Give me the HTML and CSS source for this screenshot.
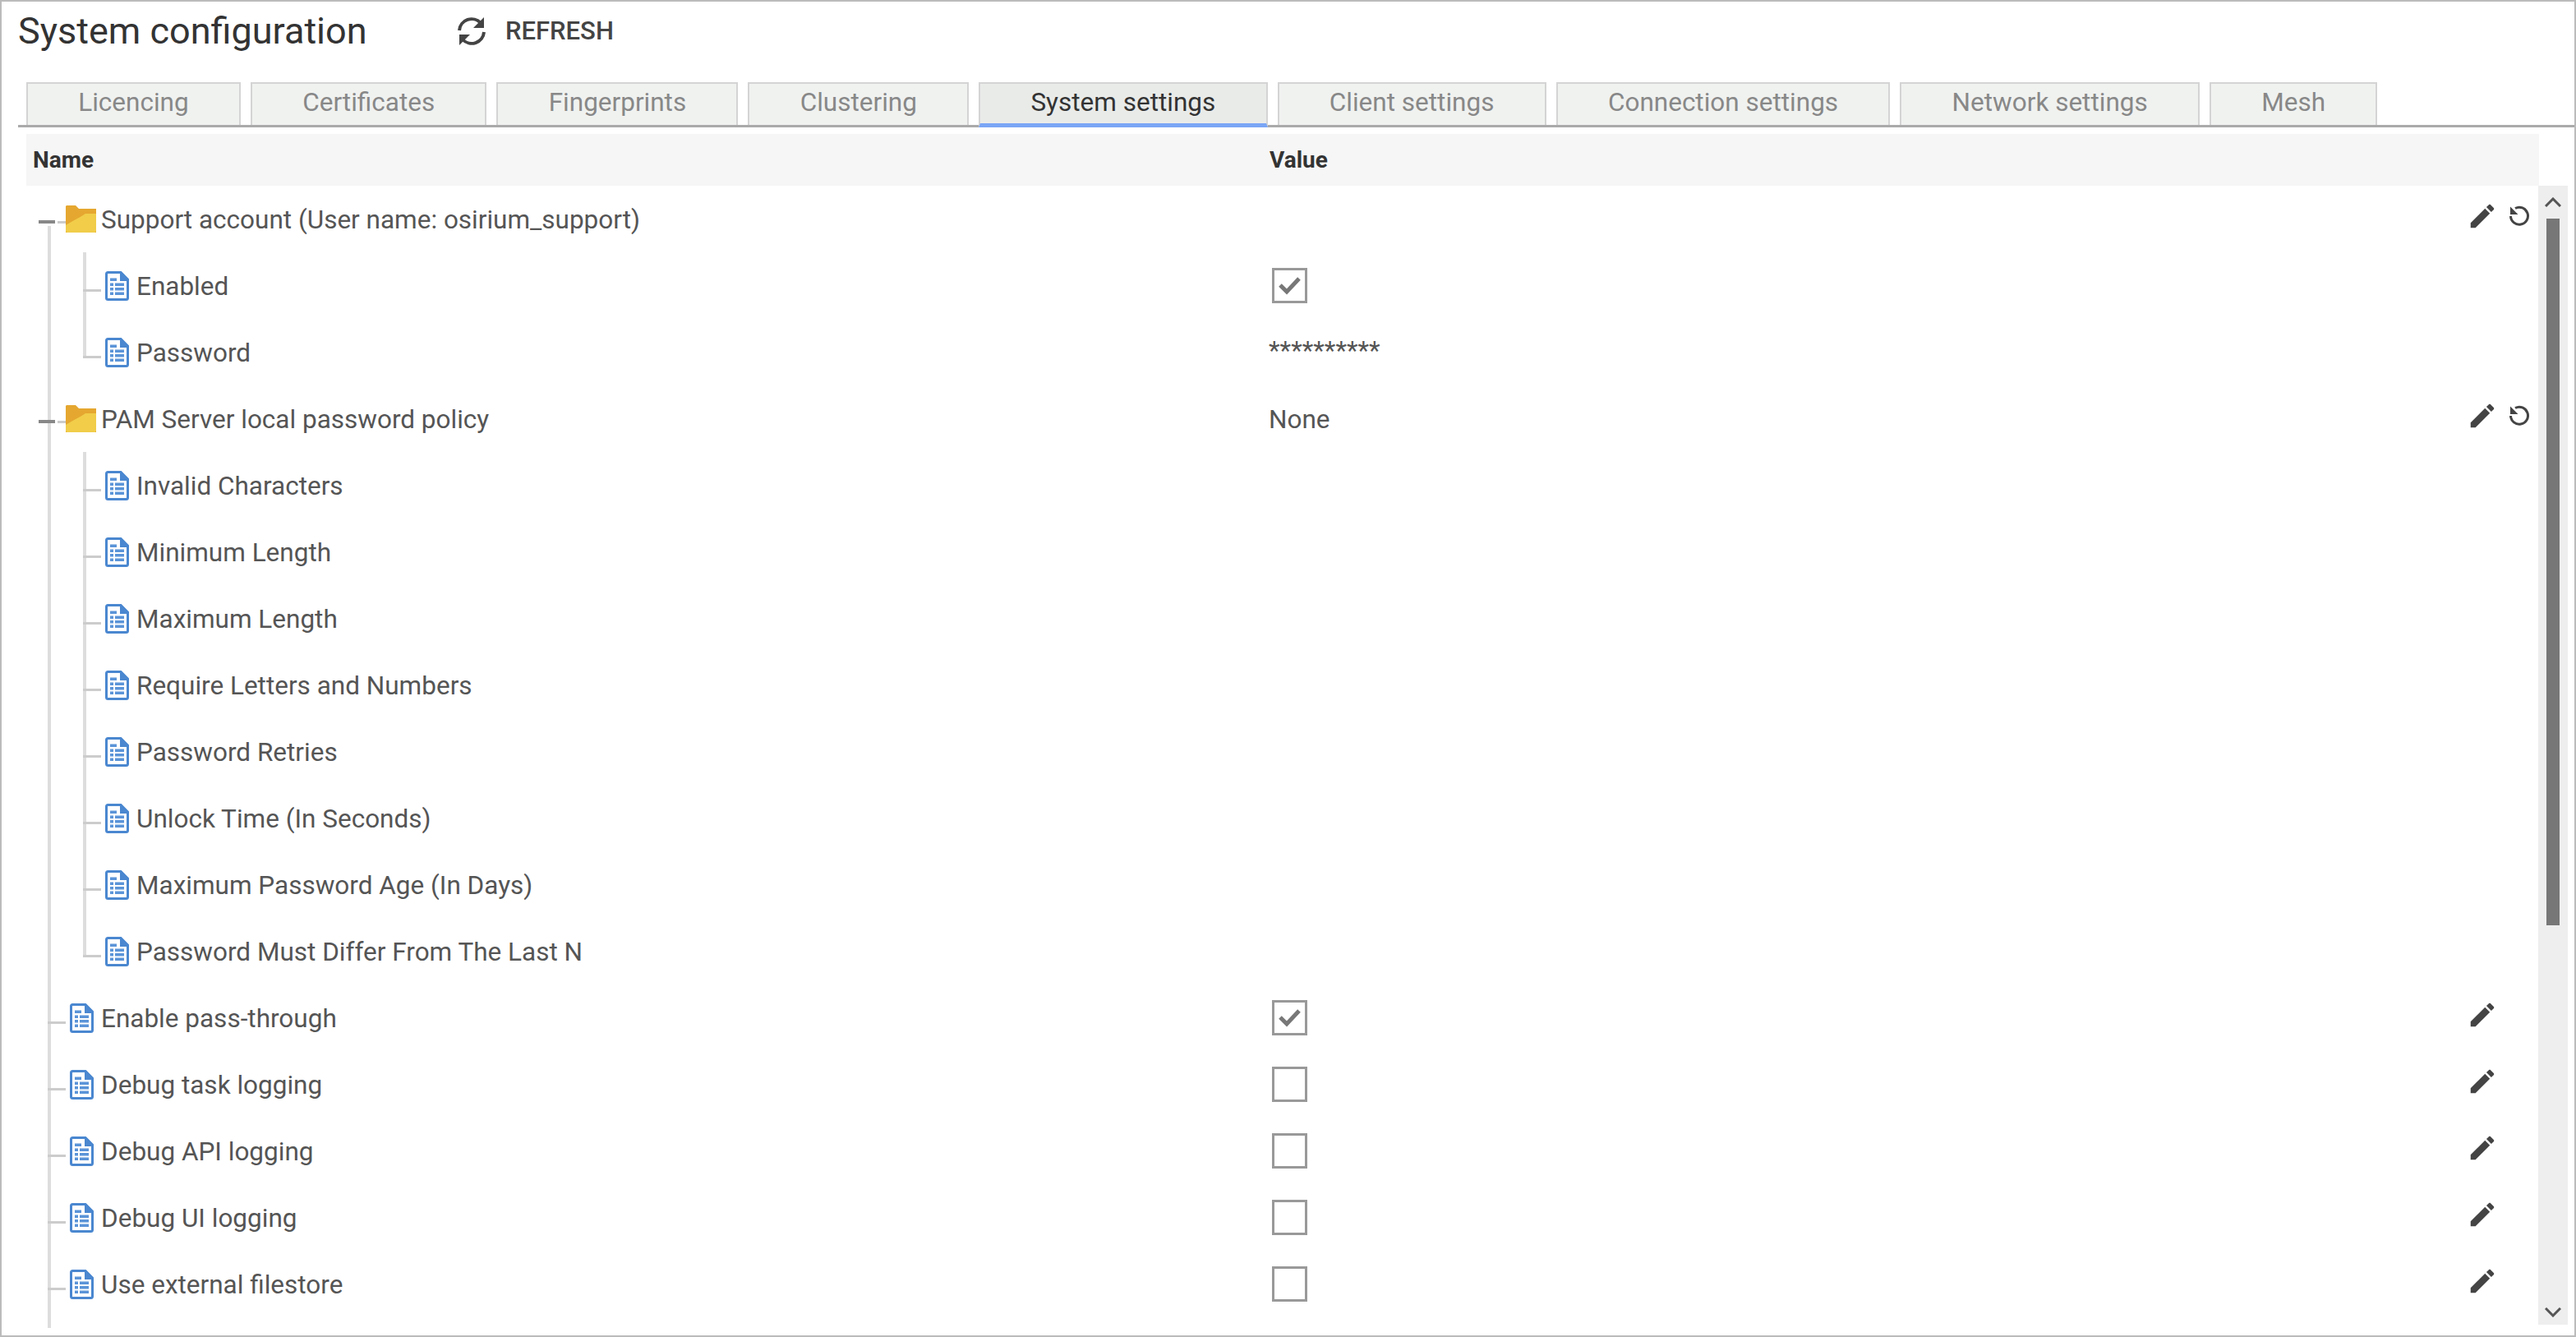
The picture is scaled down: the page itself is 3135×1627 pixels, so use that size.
FILE: index.html
```html
<!DOCTYPE html>
<html lang="en">
<head>
    <meta charset="UTF-8">
    <title>System configuration</title>
    <link rel="stylesheet" href="styles.css">
</head>
<body>
    <svg class="sprites" width="0" height="0">
        <symbol id="doc" viewBox="0 0 29 36">
            <path d="M3.5 1.5H19L27.5 10V32.5Q27.5 34.5 25.5 34.5H3.5Q1.5 34.5 1.5 32.5V3.5Q1.5 1.5 3.5 1.5Z" fill="#fff" stroke="#4a87d0" stroke-width="3"/>
            <path d="M18 1.5H20L28 9.5V12H18Z" fill="#4a87d0"/>
            <path d="M6 8.5H14V12H6ZM6 14.5H10V18H6ZM12 14.5H23V18H12ZM6 20H10V23.5H6ZM12 20H23V23.5H12ZM6 25.5H10V29H6ZM12 25.5H23V29H12Z" fill="#5b94d8"/>
        </symbol>
        <symbol id="folder" viewBox="0 0 37 33">
            <path d="M1 0H12L16 4H37V33H0V1Z" fill="#e5a730"/>
            <path d="M0 24Q10 18 14 16T24 10H37V31Q37 33 35 33H2Q0 33 0 31Z" fill="#f1cd4a"/>
        </symbol>
        <symbol id="edit" viewBox="0 0 24 24">
            <path d="M3 17.25V21h3.75L17.81 9.94l-3.75-3.75L3 17.25zM20.71 7.04c.39-.39.39-1.02 0-1.41l-2.34-2.34c-.39-.39-1.02-.39-1.41 0l-1.83 1.83 3.75 3.75 1.83-1.83z"/>
        </symbol>
        <symbol id="undo" viewBox="0 0 27 27">
            <path d="M9 4.5A10.5 10.5 0 1 1 3.5 14" fill="none" stroke="#444" stroke-width="3"/>
            <path d="M3 2.5V12H12.5Z" fill="#444"/>
        </symbol>
        <symbol id="tick" viewBox="0 0 43 43">
            <path d="M10 21L18 29L33 13" fill="none" stroke="#777" stroke-width="5"/>
        </symbol>
    </svg>

    <div class="page">
        <div class="title-bar">
            <h1>System configuration</h1>
            <div class="refresh">
                <svg class="refresh-icon" viewBox="0 0 38 36">
                    <path d="M4 17A15 15 0 0 1 30 8" fill="none" stroke="#444" stroke-width="4"/>
                    <path d="M34 19A15 15 0 0 1 8 28" fill="none" stroke="#444" stroke-width="4"/>
                    <path d="M34 1V14H21Z" fill="#444"/>
                    <path d="M4 35V22H17Z" fill="#444"/>
                </svg>
                REFRESH
            </div>
        </div>

        <div class="tabs">
            <div class="tab">Licencing</div>
            <div class="tab">Certificates</div>
            <div class="tab">Fingerprints</div>
            <div class="tab">Clustering</div>
            <div class="tab active">System settings</div>
            <div class="tab">Client settings</div>
            <div class="tab">Connection settings</div>
            <div class="tab">Network settings</div>
            <div class="tab">Mesh</div>
        </div>

        <div class="table-head">
            <div class="col-name">Name</div>
            <div class="col-value">Value</div>
        </div>

        <div class="table-body">
            <div class="rows">
                <div class="row parent">
                    <div class="col-name"><svg class="folder-icon"><use href="#folder"/></svg>Support account (User name: osirium_support)</div>
                    <div class="col-value"></div>
                    <div class="actions">
                        <svg class="edit"><use href="#edit"/></svg>
                        <svg class="undo"><use href="#undo"/></svg>
                    </div>
                </div>
                <div class="group">
                    <div class="row child">
                        <div class="col-name"><svg class="doc-icon"><use href="#doc"/></svg>Enabled</div>
                        <div class="col-value"><div class="check"><svg><use href="#tick"/></svg></div></div>
                    </div>
                    <div class="row child">
                        <div class="col-name"><svg class="doc-icon"><use href="#doc"/></svg>Password</div>
                        <div class="col-value text stars">**********</div>
                    </div>
                </div>
                <div class="row parent">
                    <div class="col-name"><svg class="folder-icon"><use href="#folder"/></svg>PAM Server local password policy</div>
                    <div class="col-value text">None</div>
                    <div class="actions">
                        <svg class="edit"><use href="#edit"/></svg>
                        <svg class="undo"><use href="#undo"/></svg>
                    </div>
                </div>
                <div class="group">
                    <div class="row child"><div class="col-name"><svg class="doc-icon"><use href="#doc"/></svg>Invalid Characters</div></div>
                    <div class="row child"><div class="col-name"><svg class="doc-icon"><use href="#doc"/></svg>Minimum Length</div></div>
                    <div class="row child"><div class="col-name"><svg class="doc-icon"><use href="#doc"/></svg>Maximum Length</div></div>
                    <div class="row child"><div class="col-name"><svg class="doc-icon"><use href="#doc"/></svg>Require Letters and Numbers</div></div>
                    <div class="row child"><div class="col-name"><svg class="doc-icon"><use href="#doc"/></svg>Password Retries</div></div>
                    <div class="row child"><div class="col-name"><svg class="doc-icon"><use href="#doc"/></svg>Unlock Time (In Seconds)</div></div>
                    <div class="row child"><div class="col-name"><svg class="doc-icon"><use href="#doc"/></svg>Maximum Password Age (In Days)</div></div>
                    <div class="row child"><div class="col-name"><svg class="doc-icon"><use href="#doc"/></svg>Password Must Differ From The Last N</div></div>
                </div>
                <div class="row leaf">
                    <div class="col-name"><svg class="doc-icon"><use href="#doc"/></svg>Enable pass-through</div>
                    <div class="col-value"><div class="check"><svg><use href="#tick"/></svg></div></div>
                    <div class="actions"><svg class="edit solo"><use href="#edit"/></svg></div>
                </div>
                <div class="row leaf">
                    <div class="col-name"><svg class="doc-icon"><use href="#doc"/></svg>Debug task logging</div>
                    <div class="col-value"><div class="check"></div></div>
                    <div class="actions"><svg class="edit solo"><use href="#edit"/></svg></div>
                </div>
                <div class="row leaf">
                    <div class="col-name"><svg class="doc-icon"><use href="#doc"/></svg>Debug API logging</div>
                    <div class="col-value"><div class="check"></div></div>
                    <div class="actions"><svg class="edit solo"><use href="#edit"/></svg></div>
                </div>
                <div class="row leaf">
                    <div class="col-name"><svg class="doc-icon"><use href="#doc"/></svg>Debug UI logging</div>
                    <div class="col-value"><div class="check"></div></div>
                    <div class="actions"><svg class="edit solo"><use href="#edit"/></svg></div>
                </div>
                <div class="row leaf">
                    <div class="col-name"><svg class="doc-icon"><use href="#doc"/></svg>Use external filestore</div>
                    <div class="col-value"><div class="check"></div></div>
                    <div class="actions"><svg class="edit solo"><use href="#edit"/></svg></div>
                </div>
            </div>

            <div class="scrollbar">
                <svg class="arrow" viewBox="0 0 20 12"><path d="M1 11L10 2L19 11" fill="none" stroke="#555" stroke-width="3"/></svg>
                <div class="track"><div class="thumb"></div></div>
                <svg class="arrow arrow-down" viewBox="0 0 20 12"><path d="M1 1L10 10L19 1" fill="none" stroke="#555" stroke-width="3"/></svg>
            </div>
        </div>
    </div>
</body>
</html>
```

FILE: styles.css
```css
* { box-sizing: border-box; }

body {
    margin: 0;
    font-family: Roboto, "Liberation Sans", sans-serif;
    background: #fff;
}
.sprites { position: absolute; }

.page {
    width: 3135px;
    height: 1627px;
    border: 2px solid #bbb;
    overflow: hidden;
}

.title-bar {
    display: flex;
    align-items: center;
    height: 70px;
    padding-left: 20px;
}
h1 {
    margin: 0;
    width: 533px;
    font-size: 45px;
    font-weight: 400;
    color: #333;
}
.refresh {
    display: flex;
    align-items: center;
    gap: 22px;
    padding-top: 1px;
    font-size: 31px;
    font-weight: 500;
    color: #444;
}
.refresh-icon { width: 38px; height: 36px; }

.tabs {
    display: flex;
    gap: 12px;
    height: 55px;
    margin: 28px 0 0 20px;
    padding-left: 10px;
    border-bottom: 3px solid #aaa;
}
.tab {
    height: 52px;
    padding: 0 61.25px;
    line-height: 46px;
    font-size: 31.5px;
    color: #888;
    background: #f0f2f0;
    border: 2px solid #d4d4d4;
    border-bottom: 0;
}
.tab.active {
    height: 55px;
    color: #333;
    background: #e9ebe9;
    border-bottom: 5px solid #7aa5f5;
}

.table-head {
    display: flex;
    align-items: center;
    width: 3058px;
    height: 63px;
    margin: 8px 0 0 30px;
    background: #f6f6f6;
    font-size: 28px;
    font-weight: 700;
    color: #333;
}
.table-head .col-name { padding-left: 8px; }

.col-name {
    display: flex;
    align-items: center;
    flex: none;
    width: 1513px;
}

.table-body {
    display: flex;
    height: 1386px;
    margin-left: 30px;
}
.rows {
    position: relative;
    width: 3057px;
    font-size: 31.5px;
    color: #555;
}
/* main tree guide */
.rows::before {
    content: "";
    position: absolute;
    left: 26px;
    top: 49px;
    bottom: -4px;
    width: 4px;
    background: #ddd;
}

.row {
    position: relative;
    display: flex;
    align-items: center;
    height: 81px;
}
.row::before {
    content: "";
    position: absolute;
    top: 45px;
    width: 22px;
    height: 3px;
    background: #ccc;
}
.leaf::before { left: 26px; }
.child::before { left: 69px; }

/* collapse handle on folders */
.parent::before {
    left: 38px;
    width: 10px;
    top: 43px;
}
.parent::after {
    content: "";
    position: absolute;
    left: 15px;
    top: 42px;
    width: 20px;
    height: 4px;
    background: #888;
}

.group { position: relative; }
.group::before {
    content: "";
    position: absolute;
    left: 69px;
    top: 0;
    bottom: 36px;
    width: 4px;
    background: #ddd;
}

.row .col-name { padding-top: 2px; }
.parent .col-name { padding-left: 48px; }
.leaf .col-name { padding-left: 53px; }
.child .col-name { padding-left: 96px; }

.folder-icon { width: 37px; height: 33px; margin: -2px 6px 0 0; flex: none; }
.doc-icon { width: 29px; height: 36px; margin: -2px 9px 0 0; flex: none; }

.col-value { flex: 1; }
.col-value.text { margin-left: -1px; padding-top: 1px; }
.col-value.stars { padding: 0 0 5px; }

.check {
    width: 43px;
    height: 43px;
    margin-left: 3px;
    border: 3px solid #999;
}
.check svg {
    display: block;
    width: 43px;
    height: 43px;
    margin: -3px;
}

.actions {
    display: flex;
    align-items: center;
    gap: 12px;
    padding: 0 10px 8px 0;
    fill: #444;
}
.edit { width: 38px; height: 38px; }
.undo { width: 27px; height: 27px; }
.edit.solo { margin-right: 39px; }

.scrollbar {
    display: flex;
    flex-direction: column;
    align-items: center;
    width: 36px;
    background: #eee;
}
.arrow {
    flex: none;
    width: 20px;
    height: 12px;
    margin: 14px 0;
}
.arrow-down { margin-bottom: 9px; }
.track { flex: 1; width: 16px; }
.thumb {
    width: 16px;
    height: 860px;
    background: #777;
}
```
